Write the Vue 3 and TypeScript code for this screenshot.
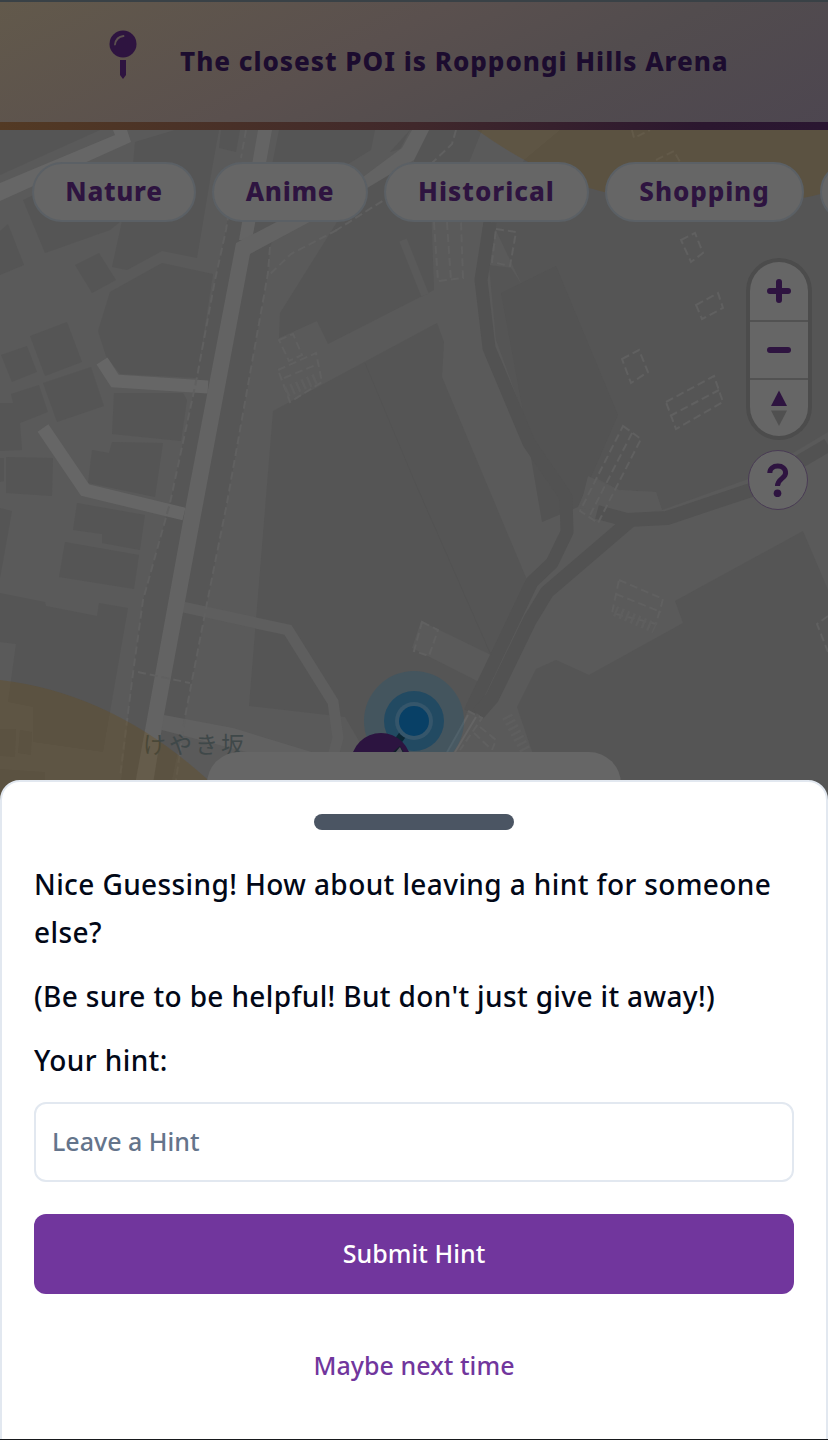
<script setup lang="ts">
import { ref } from 'vue'

interface Chip {
  id: string
  label: string
}

const closest = ref('Roppongi Hills Arena')
const hint = ref('')

const chips: Chip[] = [
  { id: 'nature', label: 'Nature' },
  { id: 'anime', label: 'Anime' },
  { id: 'historical', label: 'Historical' },
  { id: 'shopping', label: 'Shopping' },
  { id: 'more', label: '' },
]

const buildings: string[] = [
  '0,231 8,224 24,265 0,275',
  '23,200 62,182 120,222 110,230 45,253',
  '0,175 0,130 100,130',
  '122,221 203,222 197,258 162,251 127,270 112,267',
  '75,265 99,253 116,280 92,293',
  '110,292 162,263 213,274 197,378 120,374 106,356 98,331',
  '30,336 67,322 82,362 45,376',
  '1,355 27,346 37,372 12,382',
  '43,383 91,367 104,406 57,422',
  '11,394 39,385 48,412 20,423 22,450 0,451 0,403 13,403',
  '6,457 53,458 52,496 6,493',
  '0,458 4,458 4,481 0,482',
  '114,393 183,393 187,400 181,441 112,434',
  '112,442 163,443 155,497 88,483 92,450 109,453',
  '77,503 145,515 140,550 102,543 102,534 73,530',
  '65,542 139,555 134,589 59,577',
  '0,508 12,511 0,578',
  '0,593 45,602 46,606 97,616 99,603 128,608 103,752 33,742 33,707 8,702 16,644 0,642',
  '0,729 16,729 15,757 0,756',
  '20,730 32,732 31,755 18,753',
  '0,769 45,772 45,800 0,800',
  '135,142 175,130 219,130 210,180 203,222 122,222 133,165',
  '221,130 240,130 236,152 219,148',
  '279,130 375,130 371,150 330,175 270,175',
  '390,152 410,130 400,149',
  '429,130 482,130 468,165 414,165 414,160',
  '337,222 372,180 384,175 430,175 434,290 328,344 317,321 279,338 280,313',
  '273,411 437,323 444,342 442,377 527,580 491,655 421,621 412,648 481,683 440,770 370,760 345,717 249,706',
  '524,160 560,130 828,130 828,432 751,478 662,510 656,492 619,490 596,478 566,500 524,417 496,340 489,265 511,268 522,285 492,222',
  '803,531 675,601 683,623 589,675 556,660 536,669 517,707 535,760 560,800 828,800 828,590',
]

const dashed: string[] = [
  'M236 165L226 230L215 280L197 377L170 503L143 600L133 673L120 777',
  'M246 130L241 158',
  'M337 230L291 254L268 276',
  'M335 231L414 181',
  'M270 247L268 273L227 503L207 603L185 717L176 780',
  'M138 672L190 683',
  'M456 130L452 144L432 163',
  'M434 222L438 281L463 278L461 222M447 222L451 281',
  'M496 229L516 232L510 266L492 262Z',
  'M681 240L695 233L703 253L691 262Z',
  'M696 305L718 293L723 308L702 319Z',
  'M622 359L639 350L648 372L631 383Z',
  'M666 402L714 376L723 402L676 429ZM670 416L719 390',
  'M623 426L641 439L598 523L580 511ZM632 433L589 517',
  'M279 340L293 334L302 355L289 361Z',
  'M278 370L316 353L322 382L290 402ZM284 378L318 364',
  'M619 580L663 599L656 624L612 613ZM616 594L661 612',
  'M422 622L438 630L429 656L414 651Z',
  'M828 616L817 624L828 652',
  'M468 711L482 718L460 750',
  'M480 727L496 740L492 750M474 733L490 748',
  'M632 130L634 138L650 130M656 160L674 151L680 162',
]
</script>

<template>
  <main class="screen">
    <svg class="map" viewBox="0 0 828 800" aria-hidden="true">
      <rect width="828" height="800" fill="#5a5a5a" />
      <path d="M236 165L226 230L215 280L197 377L170 503L143 600L133 673L120 790H170L185 717L207 603L227 503L268 273L270 247L290 200Z" fill="#565656" />
      <polygon v-for="points in buildings" :key="points" :points="points" fill="#555" />
      <path d="M501 293L556 266L618 415L578 507L542 522L524 417Z" fill="#535353" />
      <path d="M588 476L619 490L656 492L662 510L630 515L580 508Z" fill="#5a5a5a" />
      <path d="M403 240L425 295" stroke="#5a5a5a" stroke-width="8" />
      <g class="footpaths">
        <path d="M490 222L481 280L489 348L529 443L566 497L567 532L552 563L532 582L477 697L470 712" stroke-width="13" />
        <path d="M828 445L751 490L667 518L627 520L597 512M631 520L547 592L530 620L492 698L478 714" stroke-width="14" />
      </g>
      <path d="M365 363L414 480L491 655" stroke="#525252" fill="none" stroke-width="0.7" />
      <g class="minor-roads">
        <path d="M183 607L288 630L333 702L338 738L332 760" />
      </g>
      <path d="M164 715L233 728L318 754H254L158 729Z" fill="#616161" />
      <path d="M258 130H272L252 240H239Z" fill="#646464" />
      <path d="M236 243L363 177L402 148L412 130H429L414 160L317 218L250 254L202 510L164 715L152 790H134L145 730L185 510Z" fill="#636363" />
      <path d="M0 183L115 135L113 130H127L131 142L0 201Z" fill="#666" />
      <path d="M43 428L85 490L184 514M102 361L115 381L208 387" fill="none" stroke="#666" stroke-width="13" />
      <g class="dashes">
        <path v-for="d in dashed" :key="d" :d="d" />
        <path class="stairs" d="M286 392L318 378M615 611L655 628" />
        <path class="stairs" d="M507 716L526 752" />
      </g>
      <path d="M468 715L440 765M476 717L455 752" stroke="#646464" stroke-width="2" />
      <text x="143" y="753" class="place">けやき坂</text>
      <path d="M477 130Q540 175 600 191Q670 209 735 206Q790 203 828 192V130ZM0 680Q112 693 207 779V800H0Z" fill="#6e4a08" fill-opacity=".26" />
      <circle cx="414" cy="721" r="50" fill="#0a557e" fill-opacity=".22" />
      <circle cx="414" cy="721" r="30" fill="#0b4265" fill-opacity=".6" />
      <path d="M390 752L406 730" stroke="#0b2735" stroke-width="8" />
      <circle cx="414" cy="721" r="19" fill="#35566b" />
      <circle cx="414" cy="721" r="15" fill="#084066" />
      <circle cx="381" cy="763" r="30" fill="#2c1440" />
      <path d="M392 753L400 746L404 753Z" fill="#102028" />
      <path d="M395 753L400 747L403 753Z" fill="#54555c" />
    </svg>

    <header class="banner">
      <svg class="pin" viewBox="0 0 28 50" aria-hidden="true">
        <circle cx="14" cy="14" r="13.5" fill="#2e1440" />
        <path d="M6 14.500Q7 7 14.500 6" fill="none" stroke="#5b504f" stroke-width="1.800" stroke-linecap="round" />
        <path d="M11 30H17V45L14 49L11 45Z" fill="#2e1440" />
      </svg>
      <h1>The closest POI is {{ closest }}</h1>
    </header>

    <nav class="chips">
      <button v-for="chip in chips" :key="chip.id" class="chip" :class="chip.id"><span>{{ chip.label }}</span></button>
    </nav>

    <aside class="controls">
      <div class="zoom-group">
        <button aria-label="Zoom in">
          <svg viewBox="0 0 24 24"><path d="M3 12H21M12 3V21" /></svg>
        </button>
        <button aria-label="Zoom out">
          <svg viewBox="0 0 24 24"><path d="M3 12H21" /></svg>
        </button>
        <button aria-label="Reset north">
          <svg class="compass" viewBox="0 0 16 36"><polygon points="8,0.500 16,16 0,16" fill="#2e1440" /><polygon points="0,20.500 16,20.500 8,36" fill="#505050" /></svg>
        </button>
      </div>
      <button class="help" aria-label="Help">
        <svg viewBox="0 0 22 34"><path d="M2.800 10C2.800 5.500 6.300 3 10.800 3S18.600 5.500 18.600 10C18.600 15.500 10.500 15.500 10.500 23" /><circle cx="10.500" cy="30.300" r="3.800" /></svg>
      </button>
    </aside>

    <div class="poi-card"></div>

    <section class="sheet">
      <div class="handle"></div>
      <div class="copy">
        <p class="lead">Nice Guessing! How about leaving a hint for someone else?</p>
        <p class="note">(Be sure to be helpful! But don't just give it away!)</p>
        <label for="hint">Your hint:</label>
      </div>
      <input id="hint" v-model="hint" type="text" placeholder="Leave a Hint" />
      <button class="submit"><span>Submit Hint</span></button>
      <button class="later"><span>Maybe next time</span></button>
    </section>
    <div class="edge"></div>
  </main>
</template>

<style>
body {
  margin: 0;
  background: #555;
}
</style>

<style scoped>
.screen {
  position: relative;
  width: 828px;
  height: 1440px;
  overflow: hidden;
  font-family: "Noto Sans", "Noto Sans CJK JP", sans-serif;
}
.screen * {
  box-sizing: border-box;
}
button {
  padding: 0;
  border: 0;
  font: inherit;
}
.map {
  position: absolute;
  top: 0;
  left: 0;
  width: 828px;
  height: 800px;
}
.footpaths path {
  fill: none;
  stroke: #525252;
  stroke-linejoin: round;
}
.minor-roads path {
  fill: none;
  stroke: #5e5e5e;
  stroke-width: 11;
}
.dashes path {
  fill: none;
  stroke: #606060;
  stroke-width: 2;
  stroke-dasharray: 8 4;
}
.dashes .stairs {
  stroke: #5e5e5e;
  stroke-width: 11;
  stroke-dasharray: 2.5 3.5;
}
.place {
  font-family: "Noto Sans CJK JP", sans-serif;
  font-size: 23px;
  letter-spacing: 3px;
  fill: #3f4849;
}
.banner {
  position: relative;
  display: flex;
  align-items: center;
  height: 130px;
  padding-left: 109px;
  border-top: 2px solid #394146;
  background: linear-gradient(153deg, #62594b 0%, #5a504e 42%, #524c4e 66%, #4d4650 100%);
}
.banner::after {
  content: "";
  position: absolute;
  right: 0;
  bottom: 0;
  left: 0;
  height: 8px;
  background: linear-gradient(90deg, #533a24, #40282b 50%, #2b172f 85%, #2a1631);
}
.pin {
  width: 28px;
  height: 50px;
  margin-bottom: 22px;
}
h1 {
  margin: 0 0 10px 43px;
  font-size: 26px;
  font-weight: 800;
  line-height: 40px;
  letter-spacing: 0.98px;
  white-space: nowrap;
  color: #1c0c2f;
}
.chips {
  position: relative;
  display: flex;
  gap: 16px;
  width: 1000px;
  padding: 32px;
}
.chip {
  display: flex;
  flex: none;
  align-items: center;
  justify-content: center;
  height: 60px;
  padding-bottom: 3px;
  border: 2px solid #5b6065;
  border-radius: 30px;
  background: #666;
  color: #2e1440;
  font-size: 26px;
  font-weight: 800;
  letter-spacing: 0.7px;
}
.nature { width: 164px; }
.anime { width: 156px; }
.historical { width: 205px; letter-spacing: 1px; }
.shopping { width: 199px; letter-spacing: 0.9px; }
.more { width: 150px; }
.controls {
  position: absolute;
  top: 262px;
  right: 20px;
  display: flex;
  flex-direction: column;
  align-items: flex-end;
  gap: 14px;
}
.zoom-group {
  width: 58px;
  height: 174px;
  overflow: hidden;
  border-radius: 29px;
  background: #666;
  box-shadow: 0 0 0 4px #4c4c4c;
}
.zoom-group button {
  display: flex;
  align-items: center;
  justify-content: center;
  width: 58px;
  height: 58px;
  background: transparent;
}
.zoom-group button + button {
  border-top: 2px solid #525252;
}
.zoom-group svg {
  width: 24px;
  height: 24px;
  fill: none;
  stroke: #2e1440;
  stroke-width: 6;
  stroke-linecap: round;
}
.zoom-group .compass {
  width: 16px;
  height: 36px;
  stroke: none;
}
.help {
  display: flex;
  align-items: center;
  justify-content: center;
  width: 60px;
  height: 60px;
  border: 1px solid #493b54;
  border-radius: 50%;
  background: #666;
}
.help svg {
  width: 22px;
  height: 34px;
  fill: #2e1440;
}
.help path {
  fill: none;
  stroke: #2e1440;
  stroke-width: 5;
}
.poi-card {
  position: absolute;
  top: 752px;
  left: 207px;
  width: 414px;
  height: 80px;
  border-radius: 32px;
  background: #666;
}
.sheet {
  position: absolute;
  top: 780px;
  left: 0;
  display: flex;
  flex-direction: column;
  align-items: stretch;
  width: 828px;
  height: 680px;
  padding: 32px;
  border: 2px solid #e2e8f0;
  border-radius: 20px 20px 0 0;
  background: #fff;
}
.handle {
  flex: none;
  align-self: center;
  width: 200px;
  height: 16px;
  border-radius: 8px;
  background: #4b5563;
}
.copy {
  display: flex;
  flex-direction: column;
  gap: 16px;
  margin: 30px 0 18px;
  color: #020817;
  font-size: 28px;
  font-weight: 500;
  line-height: 48px;
  letter-spacing: 0.4px;
}
.copy p {
  margin: 0;
}
.lead {
  width: 780px;
}
.note {
  letter-spacing: 0.36px;
}
input {
  height: 80px;
  padding: 0 16px 2px;
  border: 2px solid #e2e8f0;
  border-radius: 12px;
  background: #fff;
  font: 500 25px "Noto Sans", sans-serif;
}
input::placeholder {
  color: #64748b;
  opacity: 1;
}
.submit,
.later {
  flex: none;
  height: 80px;
  margin-top: 32px;
  padding-bottom: 3px;
  border-radius: 12px;
  background: #71369d;
  color: #fff;
  font-size: 25px;
  font-weight: 500;
  letter-spacing: 0.05px;
}
.later {
  background: transparent;
  color: #71369d;
}
.edge {
  position: absolute;
  bottom: 0;
  width: 828px;
  height: 1px;
  background: #17191c;
}
</style>
